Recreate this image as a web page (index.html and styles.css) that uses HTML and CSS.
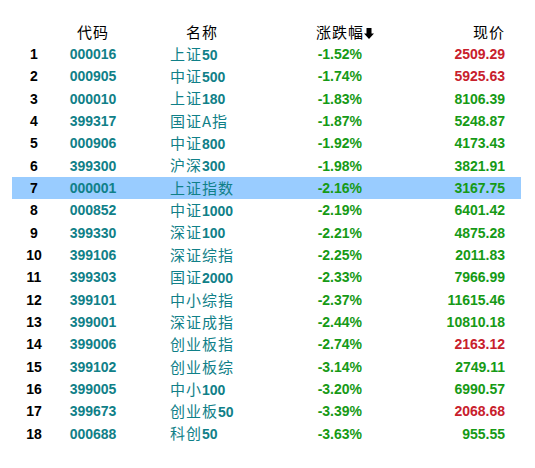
FILE: index.html
```html
<!DOCTYPE html>
<html lang="zh-CN">
<head>
    <meta charset="UTF-8">
    <title>指数排行</title>
    <link rel="stylesheet" href="styles.css">
</head>
<body>
    <div class="board">
        <div class="head">
            <div class="c-no"></div>
            <div class="c-code">代码</div>
            <div class="c-name">名称</div>
            <div class="c-chg">涨跌幅<svg class="sort" width="10" height="11" viewBox="0 0 10 11"><path d="M2.5 0h5v5.5h2.5l-5 5.5-5-5.5h2.5z"/></svg></div>
            <div class="c-price">现价</div>
        </div>
        <div class="row"><div class="c-no">1</div><div class="c-code">000016</div><div class="c-name">上证<b>50</b></div><div class="c-chg">-1.52%</div><div class="c-price up">2509.29</div></div>
        <div class="row"><div class="c-no">2</div><div class="c-code">000905</div><div class="c-name">中证<b>500</b></div><div class="c-chg">-1.74%</div><div class="c-price up">5925.63</div></div>
        <div class="row"><div class="c-no">3</div><div class="c-code">000010</div><div class="c-name">上证<b>180</b></div><div class="c-chg">-1.83%</div><div class="c-price">8106.39</div></div>
        <div class="row"><div class="c-no">4</div><div class="c-code">399317</div><div class="c-name">国证A指</div><div class="c-chg">-1.87%</div><div class="c-price">5248.87</div></div>
        <div class="row"><div class="c-no">5</div><div class="c-code">000906</div><div class="c-name">中证<b>800</b></div><div class="c-chg">-1.92%</div><div class="c-price">4173.43</div></div>
        <div class="row"><div class="c-no">6</div><div class="c-code">399300</div><div class="c-name">沪深<b>300</b></div><div class="c-chg">-1.98%</div><div class="c-price">3821.91</div></div>
        <div class="row selected"><div class="c-no">7</div><div class="c-code">000001</div><div class="c-name">上证指数</div><div class="c-chg">-2.16%</div><div class="c-price">3167.75</div></div>
        <div class="row"><div class="c-no">8</div><div class="c-code">000852</div><div class="c-name">中证<b>1000</b></div><div class="c-chg">-2.19%</div><div class="c-price">6401.42</div></div>
        <div class="row"><div class="c-no">9</div><div class="c-code">399330</div><div class="c-name">深证<b>100</b></div><div class="c-chg">-2.21%</div><div class="c-price">4875.28</div></div>
        <div class="row"><div class="c-no">10</div><div class="c-code">399106</div><div class="c-name">深证综指</div><div class="c-chg">-2.25%</div><div class="c-price">2011.83</div></div>
        <div class="row"><div class="c-no">11</div><div class="c-code">399303</div><div class="c-name">国证<b>2000</b></div><div class="c-chg">-2.33%</div><div class="c-price">7966.99</div></div>
        <div class="row"><div class="c-no">12</div><div class="c-code">399101</div><div class="c-name">中小综指</div><div class="c-chg">-2.37%</div><div class="c-price">11615.46</div></div>
        <div class="row"><div class="c-no">13</div><div class="c-code">399001</div><div class="c-name">深证成指</div><div class="c-chg">-2.44%</div><div class="c-price">10810.18</div></div>
        <div class="row"><div class="c-no">14</div><div class="c-code">399006</div><div class="c-name">创业板指</div><div class="c-chg">-2.74%</div><div class="c-price up">2163.12</div></div>
        <div class="row"><div class="c-no">15</div><div class="c-code">399102</div><div class="c-name">创业板综</div><div class="c-chg">-3.14%</div><div class="c-price">2749.11</div></div>
        <div class="row"><div class="c-no">16</div><div class="c-code">399005</div><div class="c-name">中小<b>100</b></div><div class="c-chg">-3.20%</div><div class="c-price">6990.57</div></div>
        <div class="row"><div class="c-no">17</div><div class="c-code">399673</div><div class="c-name">创业板<b>50</b></div><div class="c-chg">-3.39%</div><div class="c-price up">2068.68</div></div>
        <div class="row"><div class="c-no">18</div><div class="c-code">000688</div><div class="c-name">科创<b>50</b></div><div class="c-chg">-3.63%</div><div class="c-price">955.55</div></div>
    </div>
</body>
</html>
```

FILE: styles.css
```css
body {
    margin: 0;
    background: #fff;
    font-family: "Liberation Sans", "Noto Sans CJK SC", sans-serif;
}

/* quote list */
.board {
    width: 509px;
    margin-left: 12px;
    padding-top: 20px;
}

.head, .row {
    display: grid;
    grid-template-columns: 44px 74px 170px 62px 143px;
    align-items: center;
}

.head {
    height: 23px;
    font-family: "Noto Sans CJK SC", sans-serif;
    font-size: 15px;
    letter-spacing: 1px;
    line-height: 20px;
    color: #000;
}

.row {
    height: 22.33px;
    font-size: 14px;
    font-weight: bold;
    line-height: 18px;
}

.row.selected {
    background-color: #99ccff;
}

.c-no {
    text-align: center;
    color: #000;
}

.c-code {
    text-align: center;
    color: #108088;
}

.c-name {
    padding-left: 40px;
    color: #108088;
    font-family: "Noto Sans CJK SC", sans-serif;
    font-size: 15px;
    letter-spacing: 1px;
    font-weight: normal;
    line-height: 18px;
    white-space: nowrap;
}
.c-name b {
    font-family: "Liberation Sans", sans-serif;
    font-size: 14px;
    font-weight: bold;
    letter-spacing: 0;
}

.c-chg {
    text-align: right;
    color: #169a16;
    white-space: nowrap;
}

.c-price {
    text-align: right;
    color: #169a16;
}
.c-price.up {
    color: #c8202c;
}

/* header cells */
.head .c-code {
    color: #000;
}
.head .c-name {
    padding-left: 56px;
    color: #000;
    line-height: 20px;
}
.head .c-chg {
    text-align: left;
    margin-left: 16px;
    color: #000;
}
.head .c-price {
    color: #000;
}

.sort {
    margin-left: 0;
    vertical-align: -1px;
}
```
